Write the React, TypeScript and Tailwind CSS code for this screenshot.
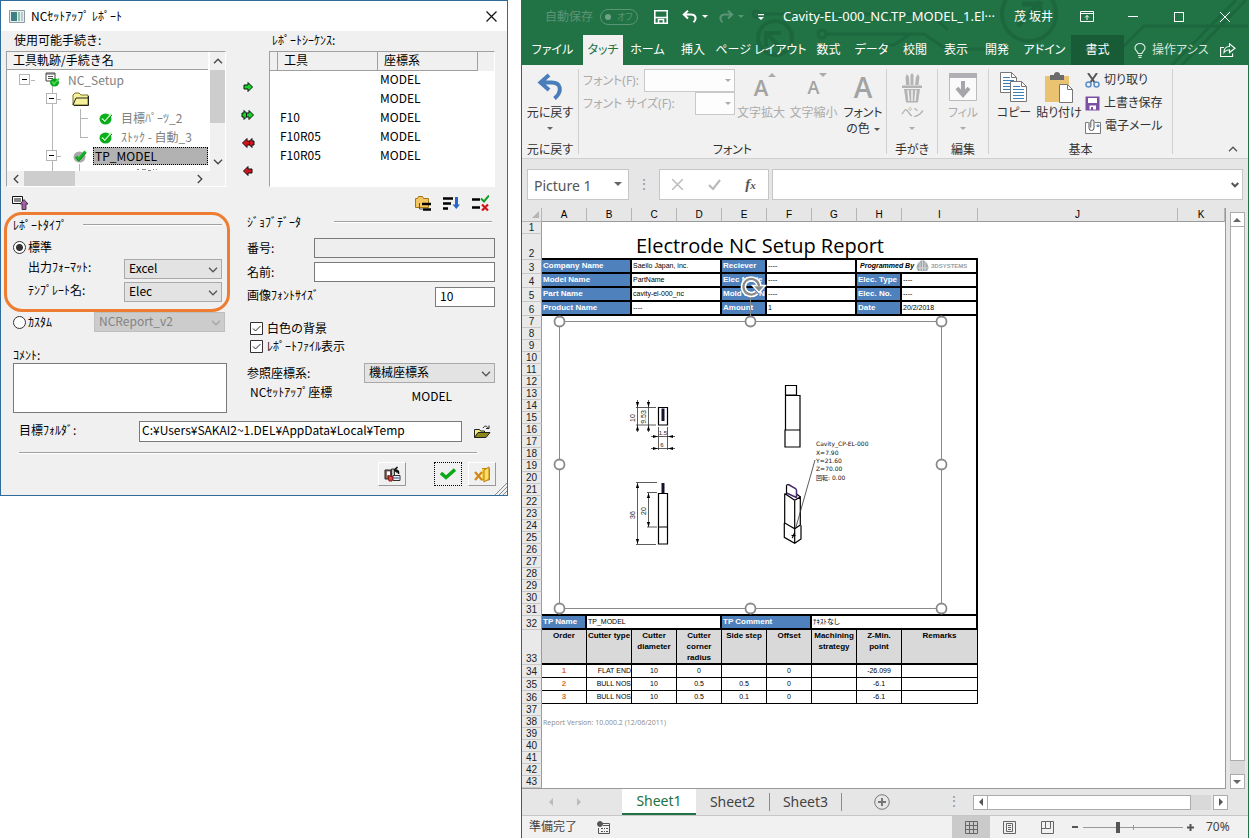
import React from "react";

/* ---------- shared bits ---------- */

const Chevron = ({ className = "" }: { className?: string }) => (
  <svg viewBox="0 0 10 6" className={`h-[6px] w-[10px] ${className}`} fill="none" stroke="currentColor" strokeWidth="1.3">
    <path d="M1 .8 5 4.8 9 .8" />
  </svg>
);

const Caret = ({ className = "", big = false }: { className?: string; big?: boolean }) => (
  <svg viewBox="0 0 6 3" className={`shrink-0 ${big ? "h-1 w-2" : "h-[3px] w-[6px]"} ${className}`} fill="currentColor">
    <path d="M0 0h6L3 3z" />
  </svg>
);

/* ---------- dialog ---------- */

function Combo({ id, value, disabled = false, className }: { id: string; value: string; disabled?: boolean; className: string }) {
  return (
    <div className={`relative h-5 ${className}`}>
      <select
        id={id}
        disabled={disabled}
        defaultValue={value}
        aria-label={value}
        className="h-full w-full appearance-none border border-[#a9a9a9] bg-[#e3e3e3] pb-0.5 pl-1 text-xs leading-4 text-black disabled:border-[#bfbfbf] disabled:bg-[#cccccc] disabled:text-[#838383] disabled:opacity-100"
      >
        <option>{value}</option>
      </select>
      <Chevron className={`pointer-events-none absolute right-1 top-2 ${disabled ? "text-[#a5a5a5]" : "text-[#555]"}`} />
    </div>
  );
}

const GreenTick = ({ gray = false }: { gray?: boolean }) => (
  <svg viewBox="0 0 14 14" className="h-[14px] w-[14px] shrink-0">
    <ellipse cx="6.5" cy="8" rx="6" ry="5.6" fill={gray ? "#a9a9a9" : "#0ab01c"} />
    <path d="M3 7.500 5.800 10.500 12.500 2.500" fill="none" stroke={gray ? "#0fb522" : "#b4f5b4"} strokeWidth={gray ? "3" : "1.6"} />
    <path d="M3 9 5.800 12 13 4" fill="none" stroke="#078a17" strokeWidth="1" />
  </svg>
);

const Toggle = () => (
  <span className="flex h-[11px] w-[11px] shrink-0 items-center justify-center border border-[#b5b5b5] bg-white">
    <span className="h-px w-[5px] bg-black" />
  </span>
);

function Tree() {
  return (
    <div className="h-[136px] border border-[#a0a0a0] border-b-white border-r-white bg-white">
      <div className="flex h-[119px]">
        <div className="relative min-w-0 flex-1 overflow-hidden">
          <div className="mr-0.5 h-[18px] border-b border-[#a0a0a0] bg-[#f2f2f2] pl-1.5 text-xs leading-4">工具軌跡/手続き名</div>
          <svg className="absolute left-0 top-0 h-[119px] w-[160px]" viewBox="7 52 160 119" stroke="#b5b5b5" fill="none">
            <path d="M31 80.500h4M52.500 86v85M52 99.500h9M80.500 109v28M80 118.500h8M80 137.500h8M52 156.500h9M79.500 164v7" />
            <path d="M137 169.500h2M142 169.500h4M148 170.500h3M153 169.500h1M156 169.500h1" stroke="#888" />
          </svg>
          <div className="relative text-xs leading-[18px] text-[#808080]">
            <div className="flex h-[19px] items-center pl-3">
              <Toggle />
              <svg viewBox="0 0 15 15" className="ml-[15px] mr-2 h-[15px] w-[15px]">
                <path d="M1 1h9v8H1z" fill="#fff" stroke="#444" />
                <path d="M1 2h9M3 4.500h5M3 6.500h5" stroke="#555" />
                <ellipse cx="9.500" cy="10.500" rx="4.500" ry="4" fill="#0aa51c" />
                <path d="M7 9.500 9 12 14 6.500" fill="none" stroke="#46d94d" strokeWidth="1.800" />
              </svg>
              NC_Setup
            </div>
            <div className="flex h-[19px] items-center pl-[39px]">
              <Toggle />
              <svg viewBox="0 0 17 14" className="ml-[15px] h-[14px] w-[17px]">
                <path d="M1 13h15V3h-7L7 1H3L1 3z" fill="#f4f19a" stroke="#77731f" />
                <path d="M1 13 4 6h12M2 13.500h14.500V4" fill="none" stroke="#222" />
              </svg>
            </div>
            <div className="flex h-[19px] items-center gap-2 pl-[92px]"><GreenTick />目標ﾊﾟｰﾂ_2</div>
            <div className="flex h-[19px] items-center gap-2 pl-[92px]"><GreenTick />ｽﾄｯｸ - 自動_3</div>
            <div className="flex h-[19px] items-center gap-1.5 pl-[39px] text-black">
              <Toggle />
              <span className="ml-2.5"><GreenTick gray /></span>
              <span className="mr-0.5 h-[18px] flex-1 border border-dotted border-black bg-[#b2b2b2] pl-px leading-[15px]">TP_MODEL</span>
            </div>
          </div>
        </div>
        <div className="flex w-[15px] flex-col items-center bg-[#f0f0f0] text-[#444]">
          <Chevron className="my-1.5 rotate-180" />
          <div className="h-[53px] w-full bg-[#cdcdcd]" />
          <Chevron className="mb-1.5 mt-auto" />
        </div>
      </div>
      <div className="flex h-[15px] items-center bg-[#f0f0f0] text-[#444]">
        <Chevron className="ml-1 rotate-90" />
        <div className="ml-[3px] h-full w-[51px] bg-[#cdcdcd]" />
        <Chevron className="ml-auto mr-5 -rotate-90" />
      </div>
    </div>
  );
}

function Arrow({ color, twin = false, left = false }: { color: string; twin?: boolean; left?: boolean }) {
  return (
    <button type="button" aria-label={left ? "remove" : "add"} className="flex h-3 w-4 items-center justify-center">
      <svg viewBox="0 0 14 12" className={`h-3 w-[14px] ${left ? "rotate-180" : ""}`} fill={color} stroke="#111" strokeWidth="1">
        {twin ? (
          <>
            <path d="M1 4h2V1.500L7.500 6 3 10.500V8H1z" />
            <path d="M5.500 4H8V1.500L12.500 6 8 10.500V8H5.500z" />
          </>
        ) : (
          <path d="M3 4h4V1.500L11.500 6 7 10.500V8H3z" />
        )}
      </svg>
    </button>
  );
}

const SEQ = [["", "MODEL"], ["", "MODEL"], ["F10", "MODEL"], ["F10R05", "MODEL"], ["F10R05", "MODEL"]];

function Dialog() {
  return (
    <section
      className="relative self-start border border-[#2f6c9c] bg-[#f0f0f0] pb-[9px] text-xs leading-4 text-black"
      style={{ fontFamily: '"Noto Sans CJK JP", sans-serif' }}
    >
      <header className="flex h-[30px] items-center bg-white pl-2 pr-2.5">
        <svg viewBox="0 0 16 13" className="mr-1.5 h-[13px] w-4">
          <path d="M.5.5h15v12H.5z" fill="#e6eef0" stroke="#8d9ba3" />
          <path d="M2 2h6v9H2z" fill="#3f7f86" /><path d="M9 2h2v9H9z" fill="#8fc7a4" /><path d="M12 2h2v9h-2z" fill="#b9c9d2" />
        </svg>
        <h1 className="flex-1 text-xs">NCｾｯﾄｱｯﾌﾟ ﾚﾎﾟｰﾄ</h1>
        <button type="button" aria-label="閉じる">
          <svg viewBox="0 0 11 11" className="h-[11px] w-[11px]" stroke="#111" strokeWidth="1.200"><path d="M.5.5l10 10M10.500.5l-10 10" /></svg>
        </button>
      </header>

      <div className="flex pl-[5px] pr-3 pt-px">
        <div className="w-[220px]">
          <h2 className="h-[19px] pl-2 leading-4">使用可能手続き:</h2>
          <Tree />
        </div>
        <div className="flex w-[43px] flex-col items-center pt-[49px]">
          <div className="flex flex-col gap-4">
            <Arrow color="#17d32b" />
            <Arrow color="#17d32b" twin />
            <Arrow color="#d3141c" twin left />
            <Arrow color="#d3141c" left />
          </div>
        </div>
        <div className="min-w-0 flex-1">
          <h2 className="h-[19px] pl-[3px] leading-4">ﾚﾎﾟｰﾄｼｰｹﾝｽ:</h2>
          <div className="h-[136px] border border-[#a0a0a0] border-b-white border-r-white bg-white">
            <table className="w-full table-fixed border-separate border-spacing-0 text-left text-xs">
              <colgroup><col className="w-2" /><col className="w-[100px]" /><col className="w-[100px]" /><col /></colgroup>
              <thead>
                <tr className="h-[19px] bg-[#f0f0f0] leading-4">
                  <th className="border-b border-r border-[#a0a0a0] p-0" />
                  <th className="border-b border-r border-[#a0a0a0] p-0 pl-1.5 align-top font-normal">工具</th>
                  <th className="border-b border-r border-[#a0a0a0] p-0 pl-1.5 align-top font-normal">座標系</th>
                  <th className="p-0" />
                </tr>
              </thead>
              <tbody>
                {SEQ.map(([tool, cs], i) => (
                  <tr key={i} className="h-[19px] align-top leading-4">
                    <td className="p-0" /><td className="p-0 pl-0.5">{tool}</td><td className="p-0 pl-0.5">{cs}</td><td className="p-0" />
                  </tr>
                ))}
              </tbody>
            </table>
          </div>
        </div>
      </div>

      <div className="flex h-[25px] items-end pb-px pl-[11px] pr-[18px]">
        <svg viewBox="0 0 17 15" className="mb-px h-[15px] w-[17px]">
          <path d="M.5 1.500h10v7H.5z" fill="#fff" stroke="#111" /><path d="M2 4h7M2 6h7" stroke="#111" />
          <path d="M12 4.500 8 9h2v5.500h4V9h2z" fill="#a45fa6" stroke="#222" strokeWidth=".8" />
        </svg>
        <div className="ml-auto flex gap-3">
          <svg viewBox="0 0 16 16" className="h-4 w-4">
            <path d="M.5 12.500V3.500h2l1-2h4l1 2h5v9z" fill="#f3c662" stroke="#a57614" />
            <path d="M7 9h9M8 14.500h8" stroke="#000" strokeWidth="2.400" /><path d="M4.500 8v6H8" stroke="#555" fill="none" />
          </svg>
          <svg viewBox="0 0 17 16" className="h-4 w-[17px]">
            <path d="M0 3.500h10M0 8.500h8M0 13.500h5" stroke="#000" strokeWidth="2.600" />
            <path d="M13.500 2v10" stroke="#2766c5" strokeWidth="3" /><path d="M9.500 9.500h7.500L13.300 14z" fill="#2766c5" />
          </svg>
          <svg viewBox="0 0 17 16" className="h-4 w-[17px]">
            <path d="M0 4.500h8M0 12.500h8" stroke="#000" strokeWidth="2.600" />
            <path d="M9 3.500 12 6.500 17 .5" stroke="#139c25" strokeWidth="2" fill="none" />
            <path d="M10 9.500l6 6M16 9.500l-6 6" stroke="#cf1519" strokeWidth="2.200" />
          </svg>
        </div>
      </div>

      <div className="flex pl-[3px] pr-3">
        <div className="w-[226px]">
          <div className="h-[100px] rounded-[18px] border-[3px] border-[#ed7d31] pl-1.5 pr-[5px]">
            <div className="flex h-5 items-center gap-4">
              <h3>ﾚﾎﾟｰﾄﾀｲﾌﾟ</h3>
              <div className="h-0.5 flex-1 border-b border-t border-b-white border-t-[#a0a0a0]" />
            </div>
            <label className="flex h-6 items-center gap-0.5">
              <input type="radio" name="rtype" defaultChecked className="m-0 h-[13px] w-[13px] appearance-none rounded-full border border-[#333] bg-[radial-gradient(circle,#333_0_3px,#fff_4px)]" />標準
            </label>
            <div className="flex h-[23px] items-start">
              <label htmlFor="fmt" className="w-24 pl-[15px]">出力ﾌｫｰﾏｯﾄ:</label>
              <Combo id="fmt" value="Excel" className="ml-[15px] w-[98px]" />
            </div>
            <div className="flex h-[23px] items-start">
              <label htmlFor="tpl" className="w-24 pl-[15px]">ﾃﾝﾌﾟﾚｰﾄ名:</label>
              <Combo id="tpl" value="Elec" className="ml-[15px] w-[98px]" />
            </div>
          </div>
          <div className="flex h-5 items-center justify-between pl-[9px] pr-[5px]">
            <label className="flex items-center gap-0.5">
              <input type="radio" name="rtype" className="m-0 h-[13px] w-[13px] appearance-none rounded-full border border-[#333] bg-white" />ｶｽﾀﾑ
            </label>
            <Combo id="custom" value="NCReport_v2" disabled className="w-[131px]" />
          </div>
          <div className="pl-[9px] pr-[3px] pt-[15px]">
            <label htmlFor="comment" className="block">ｺﾒﾝﾄ:</label>
            <textarea id="comment" className="block h-[50px] w-full resize-none border border-[#7a7a7a] bg-white" />
          </div>
        </div>

        <div className="ml-4 min-w-0 flex-1 pl-px">
          <div className="flex h-5 items-center">
            <h3 className="w-[87px]">ｼﾞｮﾌﾞﾃﾞｰﾀ</h3>
            <div className="mr-[3px] h-0.5 flex-1 border-b border-t border-b-white border-t-[#a0a0a0]" />
          </div>
          <div className="mt-1 flex h-6 items-center">
            <label htmlFor="num" className="w-[67px]">番号:</label>
            <input id="num" readOnly className="h-5 min-w-0 flex-1 border border-[#7a7a7a] bg-[#eeeeee]" />
          </div>
          <div className="flex h-[23px] items-center">
            <label htmlFor="name" className="w-[67px]">名前:</label>
            <input id="name" className="h-5 min-w-0 flex-1 border border-[#7a7a7a] bg-white" />
          </div>
          <div className="mt-1 flex h-[22px] items-start justify-between">
            <label htmlFor="fs">画像ﾌｫﾝﾄｻｲｽﾞ</label>
            <input id="fs" defaultValue="10" className="h-5 w-[60px] border border-[#7a7a7a] bg-white px-1 pb-1" />
          </div>
          {["白色の背景", "ﾚﾎﾟｰﾄﾌｧｲﾙ表示"].map((t, i) => (
            <label key={t} className={`flex h-[18px] items-center gap-1 pl-[3px] ${i === 0 ? "mt-2.5" : ""}`}>
              <input type="checkbox" defaultChecked className="peer sr-only" />
              <svg viewBox="0 0 13 13" className="h-[13px] w-[13px]" fill="#fff" stroke="#333"><path d="M.5.5h12v12H.5zM3 6.500 5.500 9 10.500 4" /></svg>
              {t}
            </label>
          ))}
          <div className="mt-[7px] flex h-[22px] items-center justify-between">
            <label htmlFor="cs">参照座標系:</label>
            <Combo id="cs" value="機械座標系" className="w-[131px]" />
          </div>
          <div className="flex h-7 items-start justify-between pl-[3px] pr-[43px]">
            <span>NCｾｯﾄｱｯﾌﾟ座標</span>
            <span className="pt-1">MODEL</span>
          </div>
        </div>
      </div>

      <div className="mt-2 flex items-center pl-[18px] pr-4">
        <label htmlFor="dir" className="w-[120px] pb-1">目標ﾌｫﾙﾀﾞ:</label>
        <input id="dir" defaultValue="C:¥Users¥SAKAI2~1.DEL¥AppData¥Local¥Temp" className="h-[21px] min-w-0 flex-1 border border-[#7a7a7a] bg-white px-0.5 pb-1" />
        <button type="button" aria-label="参照" className="ml-3">
          <svg viewBox="0 0 17 14" className="h-[14px] w-[17px]" stroke="#222" fill="none">
            <path d="M.5 12.500V4.500h5l1 1.500h4v2" fill="#f5f07d" /><path d="M.5 12.500 4 7.500h12L12 12.500z" fill="#8b8619" />
            <path d="M9 3c2-3 4-2 5.500.5M12 3.500h3v-3" />
          </svg>
        </button>
      </div>
      <div className="ml-[18px] mr-[30px] mt-2.5 h-0.5 border-b border-t border-b-white border-t-[#a0a0a0]" />
      <div className="mt-2 flex justify-end pr-[11px]">
        <button type="button" aria-label="レポート" className="mr-7 flex h-6 w-7 items-center justify-center border border-b-[#999] border-l-white border-r-[#999] border-t-white">
          <svg viewBox="0 0 17 16" className="h-4 w-[17px]">
            <path d="M1 4h6v9H1z" fill="#8a6d66" stroke="#222" /><path d="M3 5.500h3v4H3z" fill="#fff" /><path d="M7.500 3h3v8h-3z" fill="#bbb" stroke="#333" />
            <path d="M9 9.500h7v5H9z" fill="#eee" stroke="#333" /><path d="M10 12h5" stroke="#2d4b9a" /><path d="M4 9.500 9 11l-1 4H5z" fill="#db4b43" stroke="#8a1914" />
            <path d="M14.500 8c.5-3-1-4-3.500-4M13.500 1 10.500 4l3 2.500" fill="none" stroke="#111" strokeWidth="1.600" />
          </svg>
        </button>
        <button type="button" aria-label="OK" className="mr-1.5 flex h-6 w-7 items-center justify-center border border-dotted border-black">
          <svg viewBox="0 0 16 12" className="h-3 w-4"><path d="M1 5 6 9.500 15 1.500" fill="none" stroke="#08a818" strokeWidth="3.400" /></svg>
        </button>
        <button type="button" aria-label="終了" className="flex h-6 w-7 items-center justify-center border border-b-[#999] border-l-white border-r-[#999] border-t-white">
          <svg viewBox="0 0 17 17" className="h-[17px] w-[17px]">
            <path d="M8 2.500h7.500V14H8" fill="#f6ce4c" stroke="#c48a0c" /><path d="M10 4l5-3v12l-5 3z" fill="#ffdd62" stroke="#b67f09" />
            <path d="M1 6l7 8M8 6l-7 8" stroke="#d18711" strokeWidth="2.200" />
          </svg>
        </button>
      </div>
      <svg viewBox="0 0 12 12" className="absolute bottom-0 right-0 h-3 w-3" stroke="#8d8d8d"><path d="M0 12 12 0M4 12 12 4M8 12 12 8" /></svg>
    </section>
  );
}

/* ---------- spreadsheet window ---------- */

const TABS: [string, string][] = [
  ["ファイル", "w-[61px]"], ["タッチ", "w-10 bg-[#f1f1f1] text-[#217346]"], ["ホーム", "w-[49px]"], ["挿入", "w-[42px]"],
  ["ページ レイアウト", "w-[94px]"], ["数式", "w-[41px]"], ["データ", "w-[45px]"], ["校閲", "w-[42px]"], ["表示", "w-10"],
  ["開発", "w-[42px]"], ["アドイン", "w-[53px]"], ["書式", "w-[53px] bg-[#185c37]"],
];

function TitleArea() {
  return (
    <header className="relative bg-[#217346] text-xs text-white">
      <svg className="pointer-events-none absolute right-0 top-0 h-[65px] w-[500px]" viewBox="748 0 500 65" fill="none" stroke="#1d673f" strokeWidth="3">
        <circle cx="775" cy="38" r="17" strokeWidth="4" /><path d="M766 47V33h15M768 35l14 14" strokeWidth="4" />
        <circle cx="756" cy="14" r="3" /><path d="M760 14h170l18 16" /><circle cx="822" cy="34" r="4" /><path d="M826 34h98l22 15h52" />
        <circle cx="1029" cy="14" r="27" strokeWidth="4" /><path d="M1018 26l22-24M1022 4h18v18" strokeWidth="5" />
        <path d="M1118 52l26-26h104M1172 65l64-65M1182 65l64-65" /><path d="M880 45h14l18-12" />
      </svg>
      <div className="relative flex h-[33px] items-center pl-[23px]">
        <span className="w-12 whitespace-nowrap text-[#5c9477]">自動保存</span>
        <button type="button" className="ml-[7px] flex h-4 w-[38px] items-center gap-1.5 rounded-full border border-[#5c9477] pl-1 text-[9px] text-[#5c9477]">
          <span className="h-1.5 w-1.5 rounded-full bg-[#6fa387]" />オフ
        </button>
        <svg viewBox="0 0 14 14" className="ml-4 h-[14px] w-[14px]" fill="none" stroke="#fff" strokeWidth="1.600"><path d="M.8.8h12.400v12.400H.8zM1 7.500h12M4.500 13v-3.500h5V13" /></svg>
        <svg viewBox="0 0 16 13" className="ml-3.5 h-[13px] w-4" fill="none" stroke="#fff" strokeWidth="2"><path d="M6 .8 1.800 4.500 6 8.500M2 4.500h7c5 0 6 4.500 2.500 7.700" /></svg>
        <Caret className="ml-1" />
        <svg viewBox="0 0 16 13" className="ml-2.5 h-[13px] w-4 -scale-x-100" fill="none" stroke="#5c9477" strokeWidth="2"><path d="M6 .8 1.800 4.500 6 8.500M2 4.500h7c5 0 6 4.500 2.500 7.700" /></svg>
        <Caret className="ml-1 text-[#5c9477]" />
        <svg viewBox="0 0 6 6" className="ml-3.5 h-1.5 w-1.5" fill="#fff"><path d="M0 0h6v1.200H0zM0 3h6L3 6z" /></svg>
        <h1 className="ml-[19px] min-w-0 flex-1 whitespace-nowrap text-[13px]">Cavity-EL-000_NC.TP_MODEL_1.El···</h1>
        <span className="w-[58px] whitespace-nowrap pl-2">茂 坂井</span>
        <button type="button" aria-label="リボン" className="flex w-[46px] justify-center">
          <svg viewBox="0 0 14 11" className="h-[11px] w-[14px]" fill="none" stroke="#fff"><path d="M.5.5h13v10H.5zM.5 2.500h13M7 9V4.500M5 6.500l2-2 2 2" /></svg>
        </button>
        <button type="button" aria-label="最小化" className="flex w-[46px] justify-center"><span className="h-px w-2.5 bg-white" /></button>
        <button type="button" aria-label="最大化" className="flex w-[46px] justify-center"><span className="h-2.5 w-2.5 border border-white" /></button>
        <button type="button" aria-label="閉じる" className="flex w-[46px] justify-center">
          <svg viewBox="0 0 10 10" className="h-2.5 w-2.5" stroke="#fff"><path d="M0 0l10 10M10 0 0 10" /></svg>
        </button>
      </div>
      <nav className="relative flex pt-0.5">
        {TABS.map(([t, c]) => (
          <button type="button" key={t} className={`h-[30px] shrink-0 whitespace-nowrap text-center ${c}`}>{t}</button>
        ))}
        <div className="ml-2.5 flex min-w-0 flex-1 items-center text-[#d5e6dc]">
          <svg viewBox="0 0 12 15" className="mr-1.5 h-[15px] w-3 shrink-0" fill="none" stroke="currentColor" strokeWidth="1.200">
            <path d="M4 10.500C4 8.500 1 7.500 1 5a5 4.500 0 0 1 10 0c0 2.500-3 3.500-3 5.500zM4 12.500h4M4.500 14.300h3" />
          </svg>
          <span className="whitespace-nowrap">操作アシス</span>
          <svg viewBox="0 0 16 14" className="ml-auto mr-3 h-[14px] w-4 shrink-0" fill="none" stroke="#fff" strokeWidth="1.100">
            <path d="M4 4.500H.6v9h12v-3M9.500.8v2.700C6 3.500 4 6 4 9.500c1.500-2 3-2.700 5.500-2.700v2.700l5.500-4.300z" />
          </svg>
        </div>
      </nav>
    </header>
  );
}

const Group = ({ title, className, children }: { title: string; className: string; children: React.ReactNode }) => (
  <div className={`my-1 flex shrink-0 flex-col border-r border-[#d0d0d0] ${className}`}>
    <div className="flex h-[72px] items-start">{children}</div>
    <div className="h-[14px] text-center leading-5">{title}</div>
  </div>
);

const Doc = ({ x, y }: { x: number; y: number }) => (
  <g transform={`translate(${x} ${y})`}>
    <path d="M.5.5h11l5 5v15H.5z" fill="#fff" stroke="#777" /><path d="M11.500.5v5h5" fill="none" stroke="#777" />
    <path d="M3 5.500h7M3 8.500h11M3 11.500h11M3 14.500h11M3 17.500h11" stroke="#3f7fb8" />
  </g>
);

const LetterA = ({ size }: { size: string }) => (
  <span className={`font-semibold leading-9 text-[#a3a3a3] ${size}`} style={{ fontFamily: '"Open Sans", "Noto Sans", sans-serif' }}>A</span>
);

function Ribbon() {
  return (
    <div className="flex h-[94px] border-b border-[#cfcfcf] bg-[#f1f1f1] text-xs leading-4 text-[#333]">
      <Group title="元に戻す" className="w-[57px]">
        <button type="button" className="flex w-full flex-col items-center whitespace-nowrap">
          <svg viewBox="0 0 28 28" className="mb-1 mt-1 h-7 w-7" fill="none" stroke="#4a7ebb" strokeWidth="4"><path d="M13 2 4.500 9.500 13 17M4.500 9.500h11c10 0 11 9 3 16" /></svg>
          元に戻す<Caret className="mt-1.5 text-[#666]" />
        </button>
      </Group>
      <Group title="フォント" className="w-[308px]">
        <div className="flex w-[156px] flex-col pl-1 text-[#ababab]">
          <div className="flex items-center justify-between">
            <label htmlFor="ff">フォント(F):</label>
            <span className="relative"><input id="ff" disabled className="block h-[23px] w-[91px] border border-[#c9c9c9] bg-[#fdfdfd]" /><Caret className="absolute right-1 top-2.5" /></span>
          </div>
          <div className="flex items-center justify-between">
            <label htmlFor="fz" className="whitespace-nowrap">フォント サイズ(F):</label>
            <span className="relative"><input id="fz" disabled className="block h-[23px] w-10 border border-[#c9c9c9] bg-[#fdfdfd]" /><Caret className="absolute right-1 top-2.5" /></span>
          </div>
        </div>
        <button type="button" className="flex w-[52px] flex-col items-center whitespace-nowrap text-[#ababab]">
          <span className="flex h-9 items-start pl-2"><LetterA size="text-[22px]" /><Caret big className="mt-1 rotate-180" /></span>
          文字拡大
        </button>
        <button type="button" className="flex w-[53px] flex-col items-center whitespace-nowrap text-[#ababab]">
          <span className="flex h-9 items-start pl-2"><LetterA size="text-[18px]" /><Caret big className="mt-1" /></span>
          文字縮小
        </button>
        <button type="button" className="flex w-[46px] flex-col items-center whitespace-nowrap">
          <span className="flex h-9 items-start"><LetterA size="text-[28px]" /></span>
          <span>フォント</span>
          <span className="flex items-center gap-1">の色<Caret className="text-[#555]" /></span>
        </button>
      </Group>
      <Group title="手がき" className="w-[51px]">
        <button type="button" className="flex w-full flex-col items-center text-[#ababab]">
          <svg viewBox="0 0 20 30" className="mb-0.5 mt-1 h-[30px] w-5" fill="#b4b4b4">
            <path d="M3.500 4 5 1l2 3 .5 8H4zM8.500 2 10 0l1.500 2v10h-3zM14 4l2-3 1.500 3-1 8H13z" />
            <path d="M0 12.500h20v2.500H0zM2 16h16l-2 13.500H4z" /><path d="M6 17l1 11M10 17v11M14 17l-1 11" stroke="#f1f1f1" strokeWidth="1.500" />
          </svg>
          ペン<Caret className="mt-1.5" />
        </button>
      </Group>
      <Group title="編集" className="w-[51px]">
        <button type="button" className="flex w-full flex-col items-center text-[#ababab]">
          <svg viewBox="0 0 28 28" className="mb-1 mt-1 h-7 w-7"><path d="M.5.5h27v27H.5z" fill="#fafafa" stroke="#bbb" /><path d="M0 0h28v5H0z" fill="#b0b0b4" /><path d="M14 8v13M8 15l6 7 6-7" fill="none" stroke="#a6a6aa" strokeWidth="4" /></svg>
          フィル<Caret className="mt-1.5" />
        </button>
      </Group>
      <Group title="基本" className="w-[184px]">
        <button type="button" className="flex w-[46px] flex-col items-center whitespace-nowrap pl-1">
          <svg viewBox="0 0 28 36" className="h-9 w-7"><Doc x={0} y={3} /><Doc x={10} y={12} /></svg>コピー
        </button>
        <button type="button" className="flex w-12 flex-col items-center whitespace-nowrap">
          <svg viewBox="0 0 28 36" className="h-9 w-7"><path d="M0 7h24v26H0z" fill="#e9c272" /><path d="M5 6h4a3 3 0 0 1 6 0h4v5H5z" fill="#6b6b6b" /><path d="M14.500 15.500h8l5 5v13h-13z" fill="#fff" stroke="#777" /><path d="M22.500 15.500v5h5" fill="none" stroke="#777" /></svg>貼り付け
        </button>
        <div className="flex flex-col gap-[7px] whitespace-nowrap pl-0.5 pt-[3px]">
          <button type="button" className="flex items-center gap-1">
            <svg viewBox="0 0 15 15" className="h-[15px] w-[15px]" fill="none" strokeWidth="2"><path d="M3 0l7 10M12 0 5 10" stroke="#555" /><circle cx="3.500" cy="11.500" r="2.500" stroke="#5a8fc8" strokeWidth="1.500" /><circle cx="11.500" cy="11.500" r="2.500" stroke="#5a8fc8" strokeWidth="1.500" /></svg>切り取り
          </button>
          <button type="button" className="flex items-center gap-1">
            <svg viewBox="0 0 15 15" className="h-[15px] w-[15px]"><path d="M.5.5h14v14H.5z" fill="#7c4fa3" /><path d="M3 2h9v5H3zM4.500 9.500h6.500v4H4.500z" fill="#fff" /><path d="M6 11h2v3H6z" fill="#7c4fa3" /></svg>上書き保存
          </button>
          <button type="button" className="flex items-center gap-1">
            <svg viewBox="0 0 16 15" className="h-[15px] w-4" fill="none" stroke="#777"><path d="M3 3.500H.5v11h15v-11H10" fill="#fff" /><path d="M4 3v6a2.300 2.300 0 0 0 5 0V2.500a1.600 1.600 0 0 0-3.200 0v6" stroke="#555" /><path d="M12 6h2v1.500h-2z" stroke="#4a7ebb" /></svg>電子メール
          </button>
        </div>
      </Group>
      <div className="flex flex-1 items-end justify-end pb-1.5 pr-2.5"><Chevron className="rotate-180 text-[#555]" /></div>
    </div>
  );
}

function FormulaBar() {
  return (
    <div className="flex h-[49px] items-start bg-[#e6e6e6] pl-[5px] pr-[5px] pt-2.5">
      <div className="flex h-[31px] w-[102px] items-center justify-between border border-[#c6c6c6] bg-white px-1.5 pt-0.5 text-sm text-[#555]">Picture 1<Caret big className="mb-1 text-[#666]" /></div>
      <span className="w-[30px] text-center text-sm leading-[29px] text-[#999]">⋮</span>
      <div className="flex h-[31px] w-[110px] items-center justify-around border border-[#c6c6c6] bg-white">
        <svg viewBox="0 0 11 11" className="h-[11px] w-[11px]" stroke="#bbb" strokeWidth="1.500"><path d="M0 0l11 11M11 0 0 11" /></svg>
        <svg viewBox="0 0 13 11" className="h-[11px] w-[13px]" stroke="#bbb" strokeWidth="2.200" fill="none"><path d="M1 6l4 4 7-9" /></svg>
        <span className="text-[15px] font-bold italic text-[#555]" style={{ fontFamily: '"Liberation Serif", serif' }}>f<span className="text-[11px]">x</span></span>
      </div>
      <div className="ml-[3px] flex h-[31px] flex-1 items-center justify-end border border-[#c6c6c6] bg-white pr-[3px]">
        <svg viewBox="0 0 8 6" className="h-1.5 w-2" fill="none" stroke="#555" strokeWidth="2"><path d="M.7 1 4 4.300 7.300 1" /></svg>
      </div>
    </div>
  );
}

const Handle = ({ x, y }: { x: number; y: number }) => <circle cx={x} cy={y} r="5" fill="#fff" stroke="#8a8a8a" strokeWidth="1.800" />;

function Drawing() {
  return (
    <svg viewBox="542 316 434 298" className="relative block h-[298px] w-[434px] overflow-visible">
      <g fill="none" stroke="#000" strokeWidth="1.200">
        <path d="M658.500 407.500h9v17.500h-9zM658.500 493.500h9V527h-9zM658.500 527h9v17h-9z" />
        <path d="M663 408.500V421M663 483v10" stroke="#1a1030" strokeWidth="3" />
        <path d="M785.500 385.500h11V395h-11zM785.500 395.500h14.500V430h-14.500zM785 430h15v17h-15z" />
        <path d="M784.700 493.500 794.700 500.300 800.300 497V525M784.700 493.500V523L794.700 528.700 800.300 525M794.700 500.300V543.300M784.300 523V537.300L794.700 543.300 801 539V525.300M796.500 494l4 3" />
        <path d="M786.500 494.500v-8.500q0-1.500 1.500-1.500l1 .3" />
        <path d="M788.500 484.500l7 4q1 1 1 2v7l-10-4.500" stroke="#4a2c70" strokeWidth="1.500" />
        <path d="M792 538c2-1 1-5 3-5M791.500 535.500h4" />
      </g>
      <g fill="none" stroke="#333" strokeWidth=".8">
        <path d="M637.500 400v32M648.500 400v32M636 407.500h20M636 425h20M658.500 427v23M667.500 427v23M651 436.500h24M651 448.500h24" />
        <path d="M637.500 483v61M636 482.500h21M636 544.500h20M648.500 493v34M647 492.500h10M647 527h10" />
        <path d="M815 460 796 527" />
      </g>
      <g fill="#000">
        <path d="M637.500 407l-1.600-5h3.200zM648.500 407l-1.600-5h3.200zM637.500 425.500l-1.600 5h3.200zM648.500 425.500l-1.600 5h3.200z" />
        <path d="M658 436.500l-5-1.600v3.200zM658 448.500l-5-1.600v3.200zM668 436.500l5-1.600v3.200zM668 448.500l5-1.600v3.200z" />
        <path d="M637.500 483l-1.600 5h3.200zM637.500 544l-1.600-5h3.200zM648.500 493l-1.600 5h3.200zM648.500 527l-1.600-5h3.200z" />
      </g>
      <g fontFamily="Liberation Sans, Noto Sans CJK JP, sans-serif" fontSize="7" fill="#222" textAnchor="middle">
        <text transform="translate(635 418) rotate(-90)">10</text>
        <text transform="translate(646 417) rotate(-90)">9.53</text>
        <text transform="translate(635 515) rotate(-90)">36</text>
        <text transform="translate(646 511) rotate(-90)">20</text>
        <text x="663" y="435" fontSize="6">1.5</text>
        <text x="662" y="447" fontSize="6">6</text>
      </g>
      <g fontFamily="DejaVu Sans, Noto Sans CJK JP, sans-serif" fontSize="6" fill="#111">
        <text x="816" y="446">Cavity_CP-EL-000</text>
        <text x="816" y="455">X=7.90</text>
        <text x="816" y="463">Y=21.60</text>
        <text x="816" y="471">Z=70.00</text>
        <text x="816" y="480">回転: 0.00</text>
      </g>
      <path d="M559.500 321.500h382v287h-382zM750.500 296v22" fill="none" stroke="#8a8a8a" />
      {[559.5, 750.5, 941.5].map((x) => (
        <g key={x}><Handle x={x} y={321.5} /><Handle x={x} y={608.5} /></g>
      ))}
      <Handle x={559.5} y={464.5} />
      <Handle x={941.5} y={464.5} />
      <path d="M756.500 292.500A7.800 7.800 0 1 1 759 286" fill="none" stroke="#fff" strokeWidth="5.500" />
      <path d="M752.500 285.500h13l-6.500 7z" fill="#8a8a8a" stroke="#fff" strokeWidth="1.500" />
      <path d="M756.500 292.500A7.800 7.800 0 1 1 759 286" fill="none" stroke="#8a8a8a" strokeWidth="2.200" />
    </svg>
  );
}

const COLS = ["A", "B", "C", "D", "E", "F", "G", "H", "I", "J", "K"];
const Num = ({ n }: { n: number }) => (
  <th className="border-b border-r border-b-[#c8c8c8] border-r-[#9a9a9a] bg-[#e9e9e9] p-0 text-center align-bottom text-[10px] font-normal leading-[11px] text-[#222]">{n}</th>
);
const Label = ({ children, span = 1 }: { children: React.ReactNode; span?: number }) => (
  <td colSpan={span} className="overflow-hidden whitespace-nowrap border-b-2 border-r-2 border-black bg-[#4f81bd] p-0 pl-px text-[8px] font-bold leading-3 text-white">{children}</td>
);
const Value = ({ children, span = 1 }: { children: React.ReactNode; span?: number }) => (
  <td colSpan={span} className="overflow-hidden whitespace-nowrap border-b-2 border-r-2 border-black p-0 pl-px text-[7px] leading-3">{children}</td>
);

const TOOLS = [
  ["1", "FLAT END", "10", "0", "", "0", "", "-26.099", ""],
  ["2", "BULL NOS", "10", "0.5", "0.5", "0", "", "-6.1", ""],
  ["3", "BULL NOS", "10", "0.5", "0.1", "0", "", "-6.1", ""],
];
const HEADS = ["Order", "Cutter type", "Cutter diameter", "Cutter corner radius", "Side step", "Offset", "Machining strategy", "Z-Min. point", "Remarks"];
const range = (a: number, b: number) => Array.from({ length: b - a + 1 }, (_, i) => a + i);

function Sheet() {
  return (
    <div className="flex bg-[#e6e6e6]">
      <table className="min-w-0 flex-1 table-fixed border-separate border-spacing-0 border-b border-r border-[#9a9a9a] bg-white text-black" style={{ fontFamily: '"Liberation Sans", "Noto Sans CJK JP", sans-serif' }}>
        <colgroup>
          <col className="w-5" />
          {range(1, 8).map((i) => <col key={i} className="w-[45px]" />)}
          <col className="w-[76px]" /><col className="w-[200px]" /><col />
        </colgroup>
        <thead>
          <tr className="h-[14px] bg-[#e6e6e6]">
            <th className="border-b border-r border-[#b5b5b5] p-0"><svg viewBox="0 0 7 7" className="ml-2.5 h-[7px] w-[7px]" fill="#b5b5b5"><path d="M7 0v7H0z" /></svg></th>
            {COLS.map((c) => <th key={c} className="border-b border-r border-b-[#9a9a9a] border-r-[#b5b5b5] p-0 text-[10px] font-normal leading-[13px]">{c}</th>)}
          </tr>
        </thead>
        <tbody>
          <tr className="h-3"><Num n={1} /><td colSpan={9} className="p-0" /></tr>
          <tr className="h-[26px]">
            <Num n={2} />
            <td colSpan={9} className="border-b-2 border-black p-0 text-center align-bottom text-xl leading-6" style={{ fontFamily: '"Open Sans", "Noto Sans", sans-serif' }}>Electrode NC Setup Report</td>
          </tr>
          <tr className="h-[14px]">
            <Num n={3} /><Label span={2}>Company Name</Label><Value span={2}>Saeilo Japan, inc.</Value><Label>Reciever</Label><Value span={2}>----</Value>
            <td colSpan={2} className="border-b-2 border-r-2 border-black p-0">
              <div className="flex items-center gap-0.5 whitespace-nowrap pl-[3px] text-[7px] font-bold italic leading-3">
                Programmed By
                <svg viewBox="0 0 58 12" className="h-3 w-[58px]">
                  <path d="M6.500 0C10 1 12.500 5 12.500 8L11 11H2L.5 8C.5 5 3 1 6.500 0z" fill="#a3a8ad" /><path d="M6.500 0v12M4 2v9M9 2v9M1 8h11" stroke="#dfe2e4" strokeWidth=".8" />
                  <text x="15" y="8" fontSize="6" fontStyle="normal" fontWeight="bold" fontFamily="Liberation Sans, sans-serif" fill="#9aa0a5">3DSYSTEMS</text>
                </svg>
              </div>
            </td>
          </tr>
          <tr className="h-[14px]"><Num n={4} /><Label span={2}>Model Name</Label><Value span={2}>PartName</Value><Label>Elec Mode</Label><Value span={2}>----</Value><Label>Elec. Type</Label><Value>----</Value></tr>
          <tr className="h-[14px]"><Num n={5} /><Label span={2}>Part Name</Label><Value span={2}>cavity-el-000_nc</Value><Label>Mold No. N</Label><Value span={2}>----</Value><Label>Elec. No.</Label><Value>----</Value></tr>
          <tr className="h-[14px]"><Num n={6} /><Label span={2}>Product Name</Label><Value span={2}>----</Value><Label>Amount</Label><Value span={2}>1</Value><Label>Date</Label><Value>20/2/2018</Value></tr>
          {range(7, 31).map((n) => (
            <tr key={n} className="h-3">
              <Num n={n} />
              {n === 7 && <td colSpan={9} rowSpan={25} className="border-b-2 border-r-2 border-black p-0 align-top"><Drawing /></td>}
            </tr>
          ))}
          <tr className="h-[13px]"><Num n={32} /><Label>TP Name</Label><Value span={3}>TP_MODEL</Value><Label span={2}>TP Comment</Label><Value span={3}>ﾃｷｽﾄなし</Value></tr>
          <tr className="h-[34px]">
            <Num n={33} />
            {HEADS.map((h) => <th key={h} className="border-b-2 border-r border-black bg-[#d9d9d9] p-0 text-center align-top text-[8px] font-bold leading-[11px]">{h}</th>)}
          </tr>
          {TOOLS.map((row, r) => (
            <tr key={r} className="h-[13px]">
              <Num n={34 + r} />
              {row.map((v, c) => (
                <td key={c} className={`overflow-hidden whitespace-nowrap border-b border-r border-black p-0 leading-3 ${c === 0 ? "text-center text-[8px] font-bold text-[#e0702e]" : c === 1 ? "text-right text-[7px]" : "text-center text-[7px]"}`}>{v}</td>
              ))}
            </tr>
          ))}
          {range(37, 43).map((n) => (
            <tr key={n} className="h-3">
              <Num n={n} />
              <td colSpan={9} className="whitespace-nowrap p-0 pl-px text-[7px] leading-[11px] text-[#8a8a8a]" style={{ fontFamily: '"Open Sans", "Noto Sans", sans-serif' }}>{n === 38 ? "Report Version: 10.000.2 (12/06/2011)" : ""}</td>
            </tr>
          ))}
        </tbody>
      </table>
      <div className="flex w-[22px] shrink-0 flex-col items-center pt-1">
        <span className="flex h-[15px] w-[15px] items-center justify-center border border-[#ababab] bg-white"><Caret big className="rotate-180 text-[#666]" /></span>
        <span className="w-[15px] flex-1 border border-t-0 border-[#ababab] bg-white" />
        <span className="h-[13px] w-[15px] bg-[#d9d9d9]" />
        <span className="flex h-[15px] w-[15px] items-center justify-center border border-[#ababab] bg-white"><Caret big className="text-[#666]" /></span>
      </div>
    </div>
  );
}

function Footer() {
  return (
    <>
      <div className="flex h-[26px] items-stretch bg-[#e6e6e6] text-sm leading-6 text-[#444]">
        <div className="flex w-[100px] items-center gap-5 pl-[25px] text-[#bbb]">
          <Caret big className="rotate-90" /><Caret big className="-rotate-90" />
        </div>
        <button type="button" className="w-[74px] border-b-2 border-[#217346] bg-white text-[#217346]">Sheet1</button>
        <button type="button" className="w-[73px]">Sheet2</button>
        <span className="my-1 w-px bg-[#8c8c8c]" />
        <button type="button" className="w-[71px]">Sheet3</button>
        <span className="my-1 w-px bg-[#8c8c8c]" />
        <button type="button" aria-label="新しいシート" className="ml-8 flex items-center">
          <svg viewBox="0 0 16 16" className="h-4 w-4" fill="none" stroke="#777"><circle cx="8" cy="8" r="7.300" /><path d="M8 4v8M4 8h8" strokeWidth="2" /></svg>
        </button>
        <span className="ml-auto mr-3 text-[#999]">⋮</span>
        <div className="mr-5 flex h-[15px] w-[255px] self-center">
          <span className="flex w-[15px] items-center justify-center border border-[#ababab] bg-white"><Caret big className="rotate-90 text-[#555]" /></span>
          <span className="flex-1 border border-l-0 border-[#ababab] bg-white" />
          <span className="mr-0.5 w-5 bg-[#d9d9d9]" />
          <span className="flex w-[15px] items-center justify-center border border-[#ababab] bg-white"><Caret big className="-rotate-90 text-[#555]" /></span>
        </div>
      </div>
      <footer className="flex h-[23px] items-center border-t border-[#c6c6c6] bg-[#f1f1f1] pl-[7px] text-xs text-[#444]">
        <span className="w-[68px]">準備完了</span>
        <svg viewBox="0 0 13 13" className="h-[13px] w-[13px]" fill="none" stroke="#555"><path d="M5 2.500h7.500v10H1.500V7M6 4.500h6M4 7.500h2M7 7.500h1M9 7.500h2M4 10.500h2M7 10.500h1M9 10.500h2" /><circle cx="3" cy="3" r="2.500" fill="#555" /></svg>
        <button type="button" aria-label="標準" className="ml-auto flex h-full w-[38px] items-center justify-center bg-[#cacaca]">
          <svg viewBox="0 0 13 13" className="h-[13px] w-[13px]" fill="none" stroke="#666"><path d="M.5.5h12v12H.5zM4.500.5v12M8.500.5v12M.5 4.500h12M.5 8.500h12" /></svg>
        </button>
        <button type="button" aria-label="ページ レイアウト" className="flex w-[38px] justify-center">
          <svg viewBox="0 0 13 13" className="h-[13px] w-[13px]" fill="none" stroke="#666"><path d="M.5.5h12v12H.5zM3.500 2.500h6v8h-6zM5 4.500h3M5 6.500h3M5 8.500h3" /></svg>
        </button>
        <button type="button" aria-label="改ページ プレビュー" className="flex w-[38px] justify-center">
          <svg viewBox="0 0 13 13" className="h-[13px] w-[13px]" fill="none" stroke="#666"><path d="M.5.5h12v12H.5zM4.500.5v7h5v-7M.5 7.500h4" /></svg>
        </button>
        <span className="ml-1.5 h-0.5 w-1.5 bg-[#555]" />
        <label className="relative ml-[5px] h-[13px] w-[100px]">
          <input type="range" aria-label="ズーム" min="10" max="190" defaultValue="70" className="absolute inset-0 m-0 h-full w-full opacity-0" />
          <svg viewBox="0 0 100 13" className="h-[13px] w-[100px]"><path d="M0 6.500h100M50.500 4v5" stroke="#999" /><path d="M33 1h4v11h-4z" fill="#555" /></svg>
        </label>
        <svg viewBox="0 0 7 7" className="ml-1 h-[7px] w-[7px]" stroke="#555" strokeWidth="2"><path d="M3.500 0v7M0 3.500h7" /></svg>
        <span className="ml-3 w-[42px]">70%</span>
      </footer>
    </>
  );
}

export default function App() {
  return (
    <main className="grid min-h-screen grid-cols-[minmax(0,508fr)_minmax(0,728fr)] items-start gap-x-[13px] bg-white pr-[3px]">
      <Dialog />
      <section className="border border-t-0 border-[#217346] [font-feature-settings:'palt']" style={{ fontFamily: '"Noto Sans", "Noto Sans CJK JP", sans-serif' }}>
        <TitleArea />
        <Ribbon />
        <FormulaBar />
        <Sheet />
        <Footer />
      </section>
    </main>
  );
}
